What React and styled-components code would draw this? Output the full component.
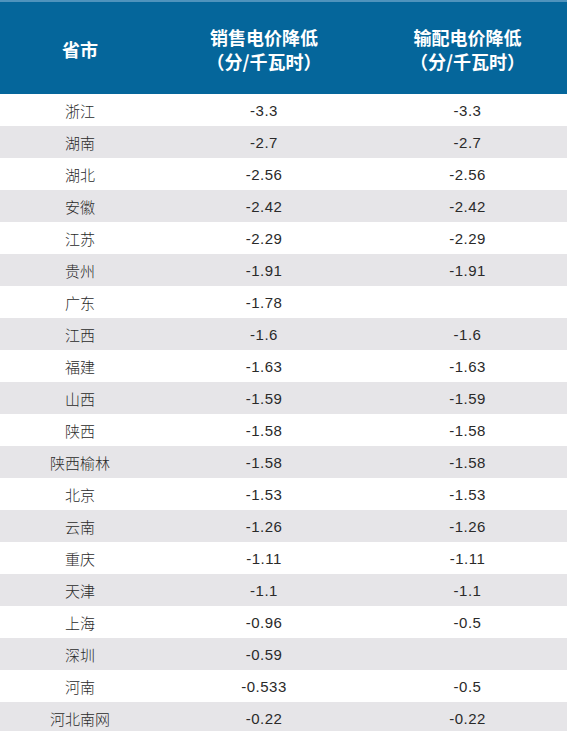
import React from "react";
import styled, { createGlobalStyle } from "styled-components";

const Global = createGlobalStyle`
  html, body { margin: 0; padding: 0; background: #ffffff; }
  body { font-family: "Liberation Sans", "Noto Sans CJK SC", sans-serif; }
`;

const Table = styled.div`
  width: 567px;
  display: flex;
  flex-direction: column;
  overflow: hidden;
`;

const Header = styled.div`
  display: grid;
  grid-template-columns: 160px 208px 1fr;
  height: 94px;
  background: #05669b;
  border-top: 2px solid #4f93bd;
  box-sizing: border-box;
  color: #ffffff;
`;

const HeadCell = styled.div`
  display: flex;
  flex-direction: column;
  align-items: center;
  justify-content: center;
  font-family: "Noto Sans CJK SC", sans-serif;
  font-weight: 700;
  font-size: 18px;
  line-height: 24px;
  padding-top: 1px;
`;

const Row = styled.div`
  display: grid;
  grid-template-columns: 160px 208px 1fr;
  height: 32px;
  align-items: center;
  background: ${(p) => (p.$alt ? "#e6e5e8" : "#ffffff")};
  color: #2a2a2a;
  padding-top: 1px;
  box-sizing: border-box;
`;

const NameCell = styled.div`
  text-align: center;
  font-family: "Noto Sans CJK SC", sans-serif;
  font-weight: 300;
  font-size: 15px;
`;

const NumCell = styled.div`
  text-align: center;
  font-family: "Liberation Sans", sans-serif;
  font-size: 15px;
  letter-spacing: 0.5px;
  color: #2a2a2a;
`;

const data = [
  ["浙江", "-3.3", "-3.3"],
  ["湖南", "-2.7", "-2.7"],
  ["湖北", "-2.56", "-2.56"],
  ["安徽", "-2.42", "-2.42"],
  ["江苏", "-2.29", "-2.29"],
  ["贵州", "-1.91", "-1.91"],
  ["广东", "-1.78", ""],
  ["江西", "-1.6", "-1.6"],
  ["福建", "-1.63", "-1.63"],
  ["山西", "-1.59", "-1.59"],
  ["陕西", "-1.58", "-1.58"],
  ["陕西榆林", "-1.58", "-1.58"],
  ["北京", "-1.53", "-1.53"],
  ["云南", "-1.26", "-1.26"],
  ["重庆", "-1.11", "-1.11"],
  ["天津", "-1.1", "-1.1"],
  ["上海", "-0.96", "-0.5"],
  ["深圳", "-0.59", ""],
  ["河南", "-0.533", "-0.5"],
  ["河北南网", "-0.22", "-0.22"],
];

export default function App() {
  return (
    <>
      <Global />
      <Table>
        <Header>
          <HeadCell>省市</HeadCell>
          <HeadCell>
            <span>销售电价降低</span>
            <span>（分/千瓦时）</span>
          </HeadCell>
          <HeadCell>
            <span>输配电价降低</span>
            <span>（分/千瓦时）</span>
          </HeadCell>
        </Header>
        {data.map((r, i) => (
          <Row key={r[0]} $alt={i % 2 === 1}>
            <NameCell>{r[0]}</NameCell>
            <NumCell>{r[1]}</NumCell>
            <NumCell>{r[2]}</NumCell>
          </Row>
        ))}
      </Table>
    </>
  );
}
